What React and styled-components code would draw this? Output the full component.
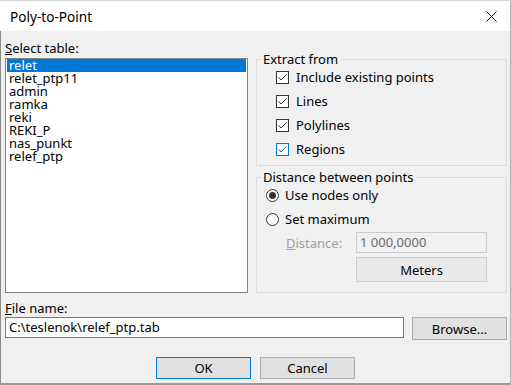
import React, { useState } from "react";
import styled, { createGlobalStyle } from "styled-components";

const GlobalStyle = createGlobalStyle`
  html, body {
    margin: 0;
    padding: 0;
    background: #ffffff;
  }
  body {
    font-family: "Noto Sans", "Open Sans", sans-serif;
    font-size: 13px;
    color: #000;
  }
`;

const Window = styled.div`
  width: 511px;
  height: 385px;
  box-sizing: border-box;
  border-top: 1px solid #d4d4d4;
  border-right: 1px solid #b0b0b0;
  display: flex;
  flex-direction: column;
  overflow: hidden;
`;

const TitleBar = styled.div`
  height: 30px;
  flex: none;
  background: #fff;
  display: flex;
  align-items: center;
  justify-content: space-between;
  padding: 0 13px 0 10px;
  font-size: 13.6px;
`;

const CloseIcon = () => (
  <svg width="11" height="11" viewBox="0 0 11 11">
    <path d="M0.5 0.5 L10.5 10.5 M10.5 0.5 L0.5 10.5" stroke="#111" strokeWidth="1" />
  </svg>
);

const Body = styled.div`
  flex: 1;
  background: #f0f0f0;
  border-left: 1px solid #8a8a8a;
  border-bottom: 2px solid #9a9a9a;
  padding: 0 0 0 4px;
  display: flex;
  flex-direction: column;
`;

const TopSection = styled.div`
  display: grid;
  grid-template-columns: 243px 251px;
  column-gap: 8px;
`;

const Column = styled.div`
  display: flex;
  flex-direction: column;
`;

const Label = styled.div`
  height: 14px;
  line-height: 14px;
  margin-top: ${(p) => p.$top || 0}px;
  color: ${(p) => (p.$disabled ? "#a0a0a0" : "#000")};
  u {
    text-decoration-thickness: 1px;
  }
`;

const ListBox = styled.ul`
  list-style: none;
  margin: 3px 0 0;
  padding: 0 1px;
  height: 235px;
  box-sizing: border-box;
  background: #fff;
  border: 1px solid #828282;
`;

const ListItem = styled.li`
  height: 13px;
  line-height: 13px;
  padding-left: 2px;
  background: ${(p) => (p.$selected ? "#0078d7" : "transparent")};
  color: ${(p) => (p.$selected ? "#fff" : "#000")};
  white-space: nowrap;
`;

const GroupBox = styled.div`
  position: relative;
  margin-top: ${(p) => p.$top}px;
  height: ${(p) => p.$height}px;
  box-sizing: border-box;
  border: 1px solid #dcdcdc;
  padding: 5px 0 0 ${(p) => p.$indent}px;
  display: flex;
  flex-direction: column;
`;

const Legend = styled.span`
  position: absolute;
  top: -8px;
  left: 4px;
  padding: 0 2px;
  background: #f0f0f0;
  line-height: 14px;
`;

const OptionRow = styled.label`
  height: 24px;
  display: flex;
  align-items: center;
  gap: ${(p) => p.$gap || 7}px;
`;

const CheckBox = styled.span`
  width: 13px;
  height: 13px;
  box-sizing: border-box;
  background: #fff;
  border: 1px solid ${(p) => (p.$hot ? "#0078d7" : "#333")};
  display: flex;
  align-items: center;
  justify-content: center;
`;

const Check = ({ color }) => (
  <svg width="11" height="11" viewBox="0 0 11 11">
    <path d="M1.5 5.5 L4 8 L9.5 2.5" fill="none" stroke={color} strokeWidth="1" />
  </svg>
);

const Radio = styled.span`
  width: 13px;
  height: 13px;
  box-sizing: border-box;
  border-radius: 50%;
  background: #fff;
  border: 1px solid #333;
  display: flex;
  align-items: center;
  justify-content: center;
  &::after {
    content: "";
    width: 7px;
    height: 7px;
    border-radius: 50%;
    background: ${(p) => (p.$checked ? "#333" : "transparent")};
  }
`;

const DistanceRow = styled.div`
  display: flex;
  align-items: center;
  margin-top: 1px;
  padding-left: 20px;
`;

const DistanceLabel = styled.span`
  width: 70px;
  color: #a0a0a0;
`;

const TextBox = styled.div`
  width: ${(p) => p.$width}px;
  height: 21px;
  box-sizing: border-box;
  border: 1px solid ${(p) => (p.$disabled ? "#cccccc" : "#7a7a7a")};
  background: ${(p) => (p.$disabled ? "#f0f0f0" : "#fff")};
  color: ${(p) => (p.$disabled ? "#6d6d6d" : "#000")};
  line-height: 19px;
  padding-left: 3px;
  white-space: nowrap;
`;

const Button = styled.button`
  font-family: inherit;
  font-size: 13px;
  color: #000;
  width: ${(p) => p.$width || 95}px;
  height: ${(p) => p.$height || 22}px;
  padding: 0;
  background: #e1e1e1;
  border: 1px solid ${(p) => (p.$default ? "#0078d7" : "#adadad")};
  box-shadow: ${(p) => (p.$default ? "inset 0 0 0 1px #e1e1e1" : "none")};
  margin-left: ${(p) => p.$left || 0}px;
  margin-top: ${(p) => p.$top || 0}px;
`;

const MetersButton = styled(Button)`
  background: #e9e9e9;
  border-color: #cfcfcf;
`;

const FileRow = styled.div`
  display: flex;
  align-items: flex-start;
  gap: 8px;
  margin-top: 2px;
`;

const ButtonRow = styled.div`
  display: flex;
  justify-content: center;
  gap: 9px;
  margin-top: 17px;
  padding-right: 4px;
`;

const tables = ["relet", "relet_ptp11", "admin", "ramka", "reki", "REKI_P", "nas_punkt", "relef_ptp"];

const extractOptions = [
  { label: "Include existing points" },
  { label: "Lines" },
  { label: "Polylines" },
  { label: "Regions", hot: true },
];

export default function App() {
  const [selected, setSelected] = useState(0);
  return (
    <>
      <GlobalStyle />
      <Window>
        <TitleBar>
          <span>Poly-to-Point</span>
          <CloseIcon />
        </TitleBar>
        <Body>
          <TopSection>
            <Column>
              <Label $top={10}>
                <u>S</u>elect table:
              </Label>
              <ListBox>
                {tables.map((t, i) => (
                  <ListItem key={t} $selected={i === selected} onClick={() => setSelected(i)}>
                    {t}
                  </ListItem>
                ))}
              </ListBox>
            </Column>
            <Column>
              <GroupBox $top={28} $height={107} $indent={19}>
                <Legend>Extract from</Legend>
                {extractOptions.map((o) => (
                  <OptionRow key={o.label}>
                    <CheckBox $hot={o.hot}>
                      <Check color={o.hot ? "#0078d7" : "#333"} />
                    </CheckBox>
                    {o.label}
                  </OptionRow>
                ))}
              </GroupBox>
              <GroupBox $top={11} $height={116} $indent={9}>
                <Legend>Distance between points</Legend>
                <OptionRow $gap={6}>
                  <Radio $checked />
                  Use nodes only
                </OptionRow>
                <OptionRow $gap={6}>
                  <Radio />
                  Set maximum
                </OptionRow>
                <DistanceRow>
                  <DistanceLabel>
                    <u>D</u>istance:
                  </DistanceLabel>
                  <TextBox $width={131} $disabled>
                    1 000,0000
                  </TextBox>
                </DistanceRow>
                <MetersButton $width={131} $height={25} $left={90} $top={4}>
                  Meters
                </MetersButton>
              </GroupBox>
            </Column>
          </TopSection>
          <Label $top={8}>
            <u>F</u>ile name:
          </Label>
          <FileRow>
            <TextBox $width={399}>C:\teslenok\relef_ptp.tab</TextBox>
            <Button $height={23}>Browse...</Button>
          </FileRow>
          <ButtonRow>
            <Button $default>OK</Button>
            <Button>Cancel</Button>
          </ButtonRow>
        </Body>
      </Window>
    </>
  );
}
